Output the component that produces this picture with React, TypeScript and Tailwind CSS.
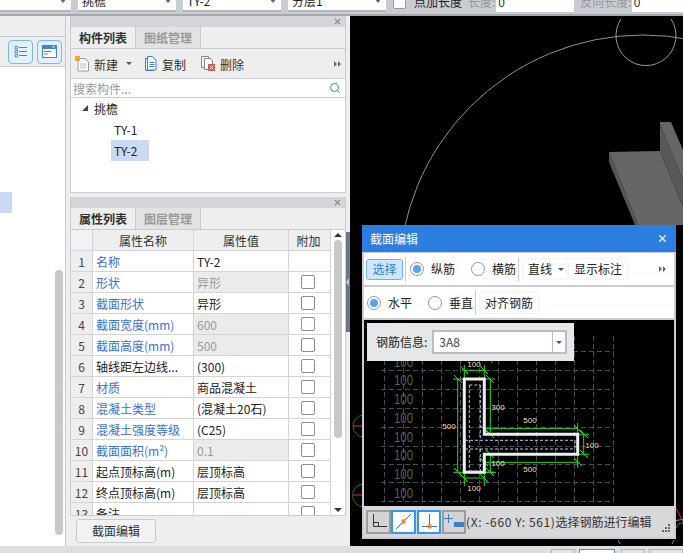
import { Search, X } from "lucide-react";

const ROWS = [
  { id: 1, name: "名称", value: "TY-2", blue: true, noCheck: true },
  { id: 2, name: "形状", value: "异形", blue: true, locked: true },
  { id: 3, name: "截面形状", value: "异形", blue: true },
  { id: 4, name: "截面宽度(mm)", value: "600", blue: true, locked: true },
  { id: 5, name: "截面高度(mm)", value: "500", blue: true, locked: true },
  { id: 6, name: "轴线距左边线...", value: "(300)" },
  { id: 7, name: "材质", value: "商品混凝土", blue: true },
  { id: 8, name: "混凝土类型", value: "(混凝土20石)", blue: true },
  { id: 9, name: "混凝土强度等级", value: "(C25)", blue: true },
  { id: 10, name: "截面面积(m²)", value: "0.1", blue: true, locked: true },
  { id: 11, name: "起点顶标高(m)", value: "层顶标高" },
  { id: 12, name: "终点顶标高(m)", value: "层顶标高" },
  { id: 13, name: "备注", value: "" },
];

const GRID_X = [383, 402, 421, 440, 459, 478, 497, 516, 535, 554, 573, 592, 612];
const GRID_Y = [351, 370, 389, 408, 427, 446, 464, 482, 501];
const GHOST_Y = [362, 380, 399, 418, 437, 455, 474, 493];

const DIM_LABELS = [
  { x: 473, y: 367, t: "100" },
  { x: 473, y: 491, t: "100" },
  { x: 448, y: 429, t: "500" },
  { x: 497, y: 410, t: "300" },
  { x: 529, y: 423, t: "500" },
  { x: 591, y: 448, t: "100" },
  { x: 497, y: 466, t: "100" },
  { x: 529, y: 472, t: "500" },
];

const TICKS = [
  [457, 379], [457, 472], [463, 370], [483, 370], [463, 478], [483, 478],
  [489, 379], [489, 434], [483, 429], [577, 429], [483, 462], [577, 462],
  [583, 434], [583, 454], [489, 454], [489, 472],
];

function TopSelect({ w, label }: { w: string; label: string }) {
  return (
    <div className={`${w} flex h-[20px] shrink-0 items-center justify-between border-b-2 border-[#b4b6ba] bg-white pl-1 pr-1 text-[#222]`}>
      <span>{label}</span>
      <span className="mb-[1px] h-0 w-0 border-x-[4px] border-t-[5px] border-x-transparent border-t-[#666]" />
    </div>
  );
}

function Tabs({ active, other }: { active: string; other: string }) {
  return (
    <div className="flex h-[22px] border-b border-[#c9ccd0] bg-[#eeeeee]">
      <div className="flex w-[65px] items-center justify-center border-r border-[#c9ccd0] font-bold text-[#333]">{active}</div>
      <div className="flex w-[65px] items-center justify-center border-r border-[#c9ccd0] bg-[#e2e2e2] font-bold text-[#999]">{other}</div>
    </div>
  );
}

function Radio({ on }: { on?: boolean }) {
  return (
    <span className="flex h-[14px] w-[14px] shrink-0 items-center justify-center rounded-full border border-[#9a9a9a] bg-white">
      {on && <span className="h-[8px] w-[8px] rounded-full bg-[#5aa2f5]" />}
    </span>
  );
}

function Arrows() {
  return (
    <svg width="8" height="8" viewBox="0 0 8 8" className="shrink-0">
      <path d="M0 1l3 3-3 3zM4 1l3 3-3 3z" fill="#666" />
    </svg>
  );
}

export default function App() {
  return (
    <div className="flex h-[553px] w-[683px] flex-col overflow-hidden bg-[#eeeeee] font-['Noto_Sans_CJK_SC',sans-serif] text-[12px] leading-none">
      {/* top strip, cut off by the crop */}
      <div className="flex h-[16px] shrink-0 items-end gap-[7px] overflow-hidden border-b-2 border-[#a5a7aa] bg-[#c9ccd2] pb-[2px]">
        <TopSelect w="w-[71px]" label="" />
        <TopSelect w="w-[98px]" label="挑檐" />
        <TopSelect w="w-[98px]" label="TY-2" />
        <TopSelect w="w-[98px]" label="分层1" />
        <div className="flex h-[20px] items-center gap-[8px]">
          <span className="h-[14px] w-[13px] rounded-[2px] border border-[#999] bg-white" />
          <span className="text-[#222]">点加长度</span>
          <span className="ml-[-2px] text-[#999]">长度:</span>
        </div>
        <div className="ml-[-6px] flex h-[20px] w-[78px] items-center bg-white pl-[2px] text-[#333]">0</div>
        <span className="ml-[-1px] flex h-[20px] items-center text-[#999]">反向长度:</span>
        <div className="ml-[-7px] flex h-[20px] flex-1 items-center bg-white pl-[2px] text-[#333]">0</div>
      </div>

      <div className="flex min-h-0 flex-1">
        {/* left panel */}
        <div className="flex w-[66px] shrink-0 flex-col border-r border-[#c5c8cc] bg-white">
          <div className="h-[21px] border-b border-[#c9ccd0] bg-[#eeeeee]" />
          <div className="flex h-[30px] items-center gap-[4px] border-b border-[#c9ccd0] bg-[#eeeeee] pl-[8px]">
            <div className="flex h-[24px] w-[25px] items-center justify-center rounded-[4px] border border-[#79b6f5] bg-[#e3f1ff]">
              <svg width="13" height="13" viewBox="0 0 13 13" fill="none" stroke="#3f84d8">
                <path d="M1 1.500h2.500v2.500h-2.500zM1 5.500h2.500v2.500h-2.500zM1 9.500h2.500v2.500h-2.500z" strokeWidth="0.9" />
                <path d="M5 2.500h8M5 6.500h8M5 10.500h8" />
              </svg>
            </div>
            <div className="flex h-[24px] w-[25px] items-center justify-center rounded-[4px] border border-[#79b6f5] bg-[#e3f1ff]">
              <svg width="15" height="13" viewBox="0 0 15 13">
                <rect x="0.500" y="0.500" width="14" height="12" fill="#fff" stroke="#3f84d8" />
                <rect x="0.500" y="0.500" width="14" height="3.500" fill="#3f84d8" />
                <path d="M2 6.500h7M2 9h4" stroke="#3f84d8" />
                <path d="M10 1.500l1.500 1.500 1.500-1.500z" fill="#fff" />
              </svg>
            </div>
          </div>
          <div className="relative min-h-0 flex-1">
            <div className="mt-[125px] h-[21px] w-[12px] bg-[#c9daf2]" />
            <div className="absolute left-[55px] top-[203px] h-[265px] w-[8px] rounded-full bg-[#c9c9c9]" />
          </div>
        </div>

        {/* middle column */}
        <div className="ml-[4px] flex w-[276px] shrink-0 flex-col">
          <div className="flex h-[177px] flex-col border-x border-b border-[#c9ccd0] bg-white">
            <div className="flex h-[11px] shrink-0 items-center justify-end bg-[#d3d5da] pr-[3px]">
              <X size={9} strokeWidth={3} className="text-[#8a8a8a]" />
            </div>
            <Tabs active="构件列表" other="图纸管理" />
            <div className="flex h-[30px] shrink-0 items-center border-b border-[#c9ccd0] bg-[#eeeeee] pl-[4px] pr-[3px] text-[#333]">
              <svg width="15" height="16" viewBox="0 0 15 16" className="shrink-0">
                <path d="M3 2.500h7l3.500 3.500v9h-10.500z" fill="#fff" stroke="#999" />
                <path d="M5 8h6M5 10h6M5 12h6" stroke="#bbb" />
                <rect x="0" y="0" width="5" height="5" fill="#f5a623" />
              </svg>
              <span className="ml-[4px] pt-[2px]">新建</span>
              <span className="ml-[8px] h-0 w-0 border-x-[3px] border-t-[3px] border-x-transparent border-t-[#555]" />
              <svg width="13" height="15" viewBox="0 0 13 15" className="ml-[12px] shrink-0">
                <path d="M1.500 2.500h8v12h-8z" fill="#fff" stroke="#3f7fc8" />
                <path d="M3.500.500h5l3.500 3.500v10h-8.500z" fill="#fff" stroke="#3f7fc8" />
                <path d="M5.500 6.500h5M5.500 8.500h5M5.500 10.500h5" stroke="#3f7fc8" />
              </svg>
              <span className="ml-[5px] pt-[2px]">复制</span>
              <svg width="15" height="15" viewBox="0 0 15 15" className="ml-[15px] shrink-0">
                <path d="M.500.500h7v11h-7z" fill="#f4f4f4" stroke="#888" />
                <path d="M3.500 2.500h6l2 2v9h-8z" fill="#fff" stroke="#888" />
                <rect x="7" y="8" width="7" height="7" fill="#d9534f" />
                <path d="M8.500 9.500l4 4M12.500 9.500l-4 4" stroke="#fff" />
              </svg>
              <span className="ml-[4px] pt-[2px]">删除</span>
              <span className="ml-auto"><Arrows /></span>
            </div>
            <div className="flex h-[19px] shrink-0 items-center justify-between border-b border-[#c9ccd0] pl-[2px] pr-[4px] text-[#9a9a9a]">
              <span className="pt-[2px]">搜索构件...</span>
              <Search size={12} strokeWidth={2} className="text-[#2f8fc4]" />
            </div>
            <div className="min-h-0 flex-1 text-[#222]">
              <div className="flex h-[21px] items-center pl-[10px]">
                <svg width="7" height="7" viewBox="0 0 7 7" className="shrink-0">
                  <path d="M7 0v6h-6z" fill="#444" />
                </svg>
                <span className="ml-[6px] pt-[1px]">挑檐</span>
              </div>
              <div className="flex h-[21px] items-center pl-[43px] pt-[1px]">TY-1</div>
              <div className="ml-[40px] flex h-[21px] w-[38px] items-center bg-[#c9daf2] pl-[3px] pt-[1px]">TY-2</div>
            </div>
          </div>

          <div className="mt-[4px] flex min-h-0 flex-1 flex-col">
            <div className="flex shrink-0 flex-col border-x border-[#c9ccd0]">
              <div className="flex h-[11px] shrink-0 items-center justify-end bg-[#d3d5da] pr-[3px]">
                <X size={9} strokeWidth={3} className="text-[#8a8a8a]" />
              </div>
              <Tabs active="属性列表" other="图层管理" />
            </div>
            <div className="flex h-[286px] shrink-0 overflow-hidden border-x border-b border-[#c9ccd0] bg-white">
              <div className="w-[259px] shrink-0">
                <div className="flex h-[21px] border-b border-[#d4d4d4] bg-[#eeeeee] text-[#333]">
                  <div className="w-[22px] border-r border-[#d4d4d4] bg-[#f0f2f5]" />
                  <div className="flex w-[101px] items-center justify-center border-r border-[#d4d4d4] pt-[2px]">属性名称</div>
                  <div className="flex w-[95px] items-center justify-center border-r border-[#d4d4d4] pt-[2px]">属性值</div>
                  <div className="flex flex-1 items-center justify-center pr-[2px] pt-[2px]">附加</div>
                </div>
                {ROWS.map((r) => (
                  <div key={r.id} className="flex h-[21px] border-b border-[#d4d4d4]">
                    <div className="flex w-[22px] items-center justify-center border-r border-[#d4d4d4] bg-[#eeeeee] pt-[2px] text-[#444]">{r.id}</div>
                    <div className={`flex w-[101px] items-center border-r border-[#d4d4d4] pl-[3px] pt-[2px] ${r.blue ? "text-[#3a6fe0]" : "text-[#222]"}`}>{r.name}</div>
                    <div className={`flex w-[95px] items-center border-r border-[#d4d4d4] pl-[3px] pt-[2px] ${r.locked ? "bg-[#ebebeb] text-[#999]" : "text-[#222]"}`}>{r.value}</div>
                    <div className="flex flex-1 items-center justify-center pr-[3px]">
                      {!r.noCheck && <span className="mb-[1px] h-[14px] w-[14px] rounded-[2px] border border-[#8e8e8e] bg-white" />}
                    </div>
                  </div>
                ))}
              </div>
              <div className="flex flex-1 flex-col items-center border-l border-[#d4d4d4] bg-white">
                <span className="mt-[3px] h-0 w-0 border-x-[4px] border-b-[4px] border-x-transparent border-b-[#333]" />
                <div className="mt-[3px] h-[198px] w-[8px] rounded-full bg-[#c9c9c9]" />
                <span className="mb-[3px] mt-auto h-0 w-0 border-x-[4px] border-t-[4px] border-x-transparent border-t-[#333]" />
              </div>
            </div>
            <div className="flex flex-1 items-start bg-[#eeeeee] pl-[6px] pt-[3px]">
              <button className="flex h-[24px] w-[80px] items-center justify-center rounded-[3px] border border-[#c4cbd6] bg-[#f2f2f2] text-[12px] text-[#333]">截面编辑</button>
            </div>
          </div>
        </div>

        {/* splitter */}
        <div className="flex w-[4px] shrink-0 flex-col">
          <div className="mt-[216px] flex h-[100px] items-center bg-[#6b7885]">
            <span className="h-0 w-0 border-y-[4px] border-r-[3px] border-y-transparent border-r-[#c9ccd2]" />
          </div>
        </div>

        {/* drawing area */}
        <div className="relative min-w-0 flex-1 bg-black">
          <svg className="absolute inset-0" width="333" height="530" viewBox="350 16 333 530" fill="none">
            <circle cx="643" cy="279" r="244" stroke="#8f8f8f" />
            <path d="M621 19a30 30 0 1 0 50 0" stroke="#9a9a9a" />
            <path d="M609 152l51-1 23 56v18h-45z" fill="#666666" />
            <path d="M609 152v10l26 63h3z" fill="#565656" />
            <path d="M660 151v-27l23 56v27z" fill="#585858" />
            <path d="M660 122h11l12 28v30l-23-56z" fill="#666666" />
            <path d="M364 415a11 11 0 0 0 0 22M364 484a11 11 0 0 0 0 23" stroke="#0f7a1e" />
            <path d="M353 426h9M353 495h9" stroke="#e03030" />
            <path d="M676 508l7 14" stroke="#e03030" />
            <path d="M676 528a7 7 0 0 1 7-5" stroke="#1f9a2e" />
            <path d="M618 540l2 4M672 544l2-4" stroke="#888" />
          </svg>

          {/* section editor window */}
          <div className="absolute left-[12px] top-[209px] flex h-[314px] w-[314px] flex-col border-x-2 border-b-2 border-[#c9ccd2] bg-[#c9ccd2] text-[#222]">
            <div className="-mx-[2px] flex h-[27px] shrink-0 items-center justify-between bg-[#2c7fe0] pl-[8px] pr-[8px] text-white">
              <span>截面编辑</span>
              <X size={11} strokeWidth={3} />
            </div>
            <div className="mt-[1px] flex h-[32px] shrink-0 items-center bg-white pl-[2px] pr-[7px]">
              <button className="flex h-[21px] w-[37px] items-center justify-center rounded-[3px] border border-[#6cb0f0] bg-[#cfe8ff] text-[12px] text-[#2f7fd8]">选择</button>
              <span className="ml-[2px] h-[24px] w-px bg-[#c9ccd0]" />
              <span className="ml-[4px]"><Radio on /></span>
              <span className="ml-[7px]">纵筋</span>
              <span className="ml-[16px]"><Radio /></span>
              <span className="ml-[7px]">横筋</span>
              <span className="ml-[2px] h-[24px] w-px bg-[#c9ccd0]" />
              <div className="ml-[3px] flex h-[22px] items-center rounded-[3px] border border-[#f3f3f3] pl-[5px] pr-[3px]">
                <span>直线</span>
                <span className="ml-[6px] h-0 w-0 border-x-[3px] border-t-[3px] border-x-transparent border-t-[#555]" />
              </div>
              <div className="flex h-[22px] items-center rounded-[3px] border border-[#f3f3f3] pl-[5px] pr-[5px]">显示标注</div>
              <span className="ml-auto"><Arrows /></span>
            </div>
            <div className="mt-[2px] flex h-[31px] shrink-0 items-center bg-white pl-[3px]">
              <Radio on />
              <span className="ml-[7px]">水平</span>
              <span className="ml-[16px]"><Radio /></span>
              <span className="ml-[7px]">垂直</span>
              <span className="ml-[2px] h-[24px] w-px bg-[#c9ccd0]" />
              <div className="ml-[3px] flex h-[22px] items-center rounded-[3px] border border-[#f3f3f3] pl-[5px] pr-[5px]">对齐钢筋</div>
            </div>
            <div className="relative mt-[2px] h-[186px] shrink-0 bg-black">
              <svg className="absolute inset-0" width="310" height="186" viewBox="363 320 310 186" fill="none">
                {GRID_Y.map((y) => (
                  <path key={y} d={`M380 ${y + 0.5}H613`} stroke="#474d58" strokeDasharray="5 3" />
                ))}
                {GRID_X.map((x) => (
                  <path key={x} d={`M${x + 0.5} 336V503`} stroke="#474d58" strokeDasharray="5 3" />
                ))}
                {GHOST_Y.map((y) => (
                  <text key={y} x="393" y={y + 5} fontSize="14" fill="#5a5e64" fontFamily="Liberation Sans, sans-serif" textLength="19" lengthAdjust="spacingAndGlyphs">100</text>
                ))}
                <path d="M452 379h42M452 472.300h42M456.700 379v93.300M463.300 365v13M483.300 365v13M463.300 473v13M483.300 473v13M463.300 370.300h20M463.300 478h20M489.300 379v55M483.300 423v11M576.700 423v11M483.300 428.700h93.400M483.300 455v13M576.700 455v13M483.300 462.300h93.400M577 434.300h11M577 454.300h11M582.700 434.300v20M484 472.300h11M489.300 454.300v18M484 454.300h11" stroke="#1fe01f" />
                {TICKS.map(([x, y]) => (
                  <path key={`${x}-${y}`} d={`M${x - 4} ${y - 4}l8 8`} stroke="#1fe01f" />
                ))}
                <path d="M463.300 379h20v55.300h93.400v20h-93.400v18h-20z" stroke="#efefef" strokeWidth="3" />
                <path d="M468.300 385h11M468.300 471h11M468.300 385v86M479.300 385v55M479.300 449v22M464 440.300h110M464 449h110M574 440.300v8.700" stroke="#a8cdf0" strokeDasharray="3 2" />
                <path d="M490 363l4-6" stroke="#777" strokeDasharray="2 2" />
                {DIM_LABELS.map((l) => (
                  <text key={`${l.x}-${l.y}`} x={l.x} y={l.y} fontSize="8" fill="#ffdfa6" textAnchor="middle" fontFamily="Liberation Sans, sans-serif">{l.t}</text>
                ))}
              </svg>
              <div className="absolute left-[3px] top-[3px] flex h-[38px] w-[207px] items-center bg-[#e4e8e8] pl-[9px]">
                <span>钢筋信息:</span>
                <div className="ml-[5px] flex h-[24px] w-[135px] items-center border-2 border-[#b9bcc0] bg-white pl-[5px] text-[#444]">
                  <span className="flex-1">3A8</span>
                  <span className="flex h-full w-[13px] items-center justify-center border-l border-[#b9bcc0]">
                    <span className="h-0 w-0 border-x-[3px] border-t-[3px] border-x-transparent border-t-[#555]" />
                  </span>
                </div>
              </div>
            </div>
            <div className="relative flex flex-1 items-center bg-[#d8d8da] pl-[2px] text-[#333]">
              <div className="flex h-[24px] w-[25px] items-center justify-center border-2 border-[#9c9c9c] bg-[#d4d4d4]">
                <svg width="17" height="15" viewBox="0 0 17 15" fill="none" stroke="#333">
                  <path d="M3.500 0v12.500h13.500M3.500 8.500h5v4" />
                </svg>
              </div>
              <div className="flex h-[24px] w-[25px] items-center justify-center border-2 border-[#2b9af3] bg-white">
                <svg width="17" height="17" viewBox="0 0 17 17" fill="none">
                  <path d="M1 16L16 1" stroke="#3f6fb8" />
                  <rect x="6.500" y="6.500" width="4" height="4" fill="#f08a24" />
                </svg>
              </div>
              <div className="ml-[1px] flex h-[24px] w-[24px] items-center justify-center border-2 border-[#2b9af3] bg-white">
                <svg width="17" height="15" viewBox="0 0 17 15" fill="none">
                  <path d="M8.500 0v13M1 12.500h15" stroke="#3f6fb8" />
                  <rect x="6.500" y="10.500" width="4" height="4" fill="#f08a24" />
                </svg>
              </div>
              <div className="ml-[1px] flex h-[24px] w-[24px] items-center justify-center border-2 border-[#9c9c9c] bg-[#d4d4d4]">
                <svg width="20" height="15" viewBox="0 0 20 15" fill="none">
                  <path d="M4.500 0v9M0 4.500h9" stroke="#3f7fc8" />
                  <rect x="10" y="8" width="10" height="5" fill="#3f7fc8" />
                </svg>
              </div>
              <span className="whitespace-nowrap text-[#333]"><span className="tracking-[0.6px]">(X: -660 Y: 561)</span>选择钢筋进行编辑</span>
              <svg width="9" height="9" viewBox="0 0 9 9" className="absolute bottom-[4px] right-[3px]">
                <path d="M6 0h2v2h-2zM3 3h2v2h-2zM6 3h2v2h-2zM0 6h2v2h-2zM3 6h2v2h-2zM6 6h2v2h-2z" fill="#666" />
              </svg>
            </div>
          </div>
        </div>
      </div>

      {/* status strip */}
      <div className="flex h-[7px] shrink-0 items-start bg-[#dedede] pl-[551px] pt-[3px]">
        <div className="h-[8px] w-[24px] border border-[#b0b0b0] bg-[#e4e4e4]" />
        <div className="ml-[4px] h-[8px] w-[36px] border border-[#2b9af3] bg-white" />
        <div className="ml-[6px] h-[8px] w-[24px] border border-[#b0b0b0] bg-[#e4e4e4]" />
        <div className="ml-[4px] h-[8px] w-[34px] border border-[#b0b0b0] bg-[#e4e4e4]" />
      </div>
    </div>
  );
}
